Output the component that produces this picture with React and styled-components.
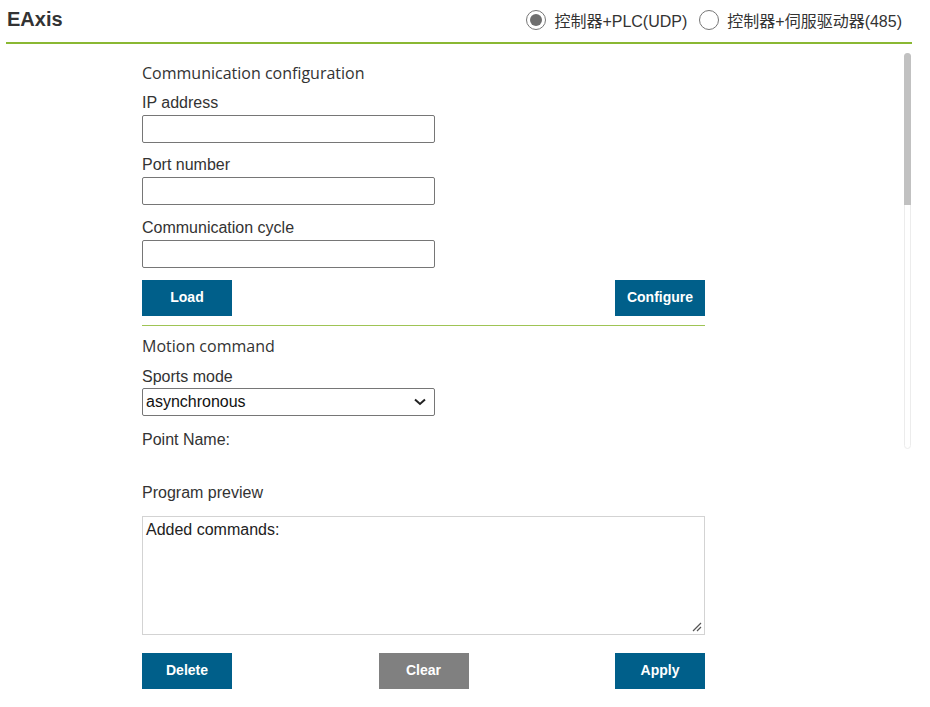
import React from "react";
import styled, { createGlobalStyle } from "styled-components";

const Global = createGlobalStyle`
  html, body { margin: 0; padding: 0; background: #fff; }
  body { font-family: "Liberation Sans", Arial, "Noto Sans CJK SC", sans-serif; color: #333; }
  * { box-sizing: border-box; }
`;

const Page = styled.div`
  margin: 0 18px 0 6px;
`;

const Header = styled.header`
  height: 44px;
  border-bottom: 2px solid #8ab832;
  display: flex;
  align-items: center;
  justify-content: space-between;
  padding: 0 10px 3px 1px;
`;

const Title = styled.h1`
  margin: 0;
  font-size: 20px;
  font-weight: bold;
  color: #333;
`;

const RadioGroup = styled.div`
  display: flex;
  align-items: center;
  gap: 12px;
`;

const RadioLabel = styled.label`
  display: flex;
  align-items: center;
  gap: 8px;
  font-size: 16px;
  color: #333;
  font-family: "Liberation Sans", Arial, "Noto Sans CJK SC", sans-serif;
`;

const RadioCircle = styled.span`
  width: 20px;
  height: 20px;
  border-radius: 50%;
  border: 1px solid #767676;
  display: flex;
  align-items: center;
  justify-content: center;
  &::after {
    content: "";
    width: 12px;
    height: 12px;
    border-radius: 50%;
    background: ${(p) => (p.$checked ? "#6e6e6e" : "transparent")};
  }
`;

const Body = styled.div`
  display: flex;
  justify-content: space-between;
`;

const Content = styled.main`
  width: 563px;
  margin-left: 136px;
  padding-top: 18px;
  display: flex;
  flex-direction: column;
`;

const SectionTitle = styled.h2`
  margin: ${(p) => p.$mt || 0}px 0 0;
  font-family: "Open Sans", "Noto Sans", sans-serif;
  font-weight: 400;
  font-size: 16px;
  line-height: 22px;
  color: #333;
`;

const Label = styled.div`
  font-size: 16px;
  line-height: 19px;
  color: #333;
  margin-top: ${(p) => p.$mt || 0}px;
`;

const TextInput = styled.input`
  width: 293px;
  height: 28px;
  margin-top: 3px;
  border: 1px solid #767676;
  border-radius: 2px;
  font-size: 16px;
  font-family: inherit;
  padding: 0 4px;
  background: #fff;
`;

const SelectBox = styled.div`
  width: 293px;
  height: 28px;
  margin-top: 2px;
  border: 1px solid #767676;
  border-radius: 2px;
  display: flex;
  align-items: center;
  justify-content: space-between;
  padding: 0 8px 0 3px;
  font-size: 16px;
  color: #111;
`;

const ButtonRow = styled.div`
  display: flex;
  justify-content: space-between;
  margin-top: ${(p) => p.$mt || 0}px;
`;

const Button = styled.button`
  width: 90px;
  height: 36px;
  border: none;
  background: ${(p) => (p.$muted ? "#808080" : "#005f8a")};
  color: #fff;
  font-family: "Liberation Sans", Arial, sans-serif;
  font-weight: bold;
  font-size: 14px;
  padding: 0 0 2px;
`;

const Divider = styled.hr`
  margin: 9px 0 0;
  border: none;
  border-top: 1px solid #9fc455;
  height: 0;
`;

const Spacer = styled.div`
  height: ${(p) => p.$h}px;
`;

const Preview = styled.div`
  position: relative;
  margin-top: 14px;
  height: 119px;
  border: 1px solid #d3d3d3;
  padding: 3px 3px;
  font-size: 16px;
  line-height: 19px;
  color: #222;
`;

const Grip = styled.svg`
  position: absolute;
  right: 2px;
  bottom: 2px;
`;

const ScrollTrack = styled.div`
  width: 7px;
  height: 396px;
  margin-top: 9px;
  margin-right: 1px;
  border: 1px solid #ececec;
  border-radius: 4px;
  display: flex;
  flex-direction: column;
`;

const ScrollThumb = styled.div`
  height: 152px;
  margin: -1px;
  background: #c1c1c1;
  border-radius: 4px 4px 0 0;
`;

export default function App() {
  return (
    <Page>
      <Global />
      <Header>
        <Title>EAxis</Title>
        <RadioGroup>
          <RadioLabel>
            <RadioCircle $checked />
            控制器+PLC(UDP)
          </RadioLabel>
          <RadioLabel>
            <RadioCircle />
            控制器+伺服驱动器(485)
          </RadioLabel>
        </RadioGroup>
      </Header>
      <Body>
        <Content>
          <SectionTitle>Communication configuration</SectionTitle>
          <Label $mt={9}>IP address</Label>
          <TextInput />
          <Label $mt={12}>Port number</Label>
          <TextInput />
          <Label $mt={13}>Communication cycle</Label>
          <TextInput />
          <ButtonRow $mt={12}>
            <Button>Load</Button>
            <Button>Configure</Button>
          </ButtonRow>
          <Divider />
          <SectionTitle $mt={9}>Motion command</SectionTitle>
          <Label $mt={10}>Sports mode</Label>
          <SelectBox>
            <span>asynchronous</span>
            <svg width="12" height="8" viewBox="0 0 12 8">
              <path d="M1 1.5 L6 6 L11 1.5" fill="none" stroke="#222" strokeWidth="2" />
            </svg>
          </SelectBox>
          <Label $mt={14}>Point Name:</Label>
          <Spacer $h={34} />
          <Label>Program preview</Label>
          <Preview>
            Added commands:
            <Grip width="11" height="11" viewBox="0 0 11 11">
              <path d="M10 2 L2 10 M10 6 L6 10" stroke="#555" strokeWidth="1.2" />
            </Grip>
          </Preview>
          <ButtonRow $mt={18}>
            <Button>Delete</Button>
            <Button $muted>Clear</Button>
            <Button>Apply</Button>
          </ButtonRow>
        </Content>
        <ScrollTrack>
          <ScrollThumb />
        </ScrollTrack>
      </Body>
    </Page>
  );
}
